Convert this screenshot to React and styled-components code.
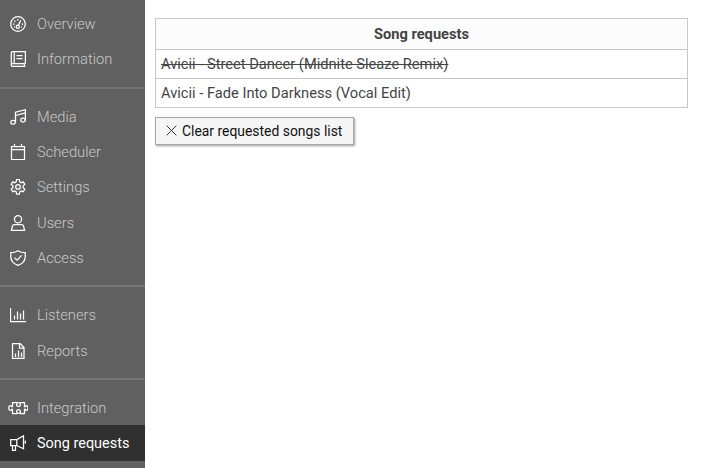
import styled, { createGlobalStyle } from "styled-components"

const icons = {
    overview: (
        <>
            <circle cx="8" cy="8" r="7.3" />
            <circle cx="7.8" cy="10.7" r="1.6" />
            <path d="M8.4 9.2L10.8 4.4M3 8.2h1.5M4.3 4.8l1 .9M7.8 3v1.4M11.7 8.2h1.5M3.9 11.2l.9-.4M12.1 11.2l-.9-.4" />
        </>
    ),
    information: (
        <path d="M15.4 12.5V.6H2.6Q1.3.6 1.3 2v12q0 1.4 1.4 1.4h12.7M1.5 12.5h13.9M14.3 12.5v2.9M4.2.6v11.9M6.5 4.5h6M6.5 7.5h6" />
    ),
    media: (
        <>
            <ellipse cx="3" cy="13.3" rx="2.3" ry="1.9" />
            <ellipse cx="13" cy="11.1" rx="2.3" ry="1.9" />
            <path d="M5.5 13.3V3.2L15.4.7v10.4M5.5 6.5l9.9-2.6" />
        </>
    ),
    scheduler: <path d="M1.5 2.5h13v13h-13zM1.5 5.5h13M4.5 0v2.5M11.5 0v2.5" />,
    settings: (
        <>
            <path d="M6.6.7h2.8l.4 2.1 1.5.9 2-.8 1.5 2.5-1.7 1.5v1.9l1.7 1.4-1.5 2.5-2-.7-1.5.9-.4 2.2H6.6l-.4-2.2-1.5-.9-2 .7-1.5-2.5 1.7-1.4V6.9L1.2 5.4l1.5-2.5 2 .8 1.5-.9z" />
            <circle cx="8" cy="7.9" r="2.3" />
        </>
    ),
    users: (
        <>
            <circle cx="8" cy="4.3" r="3.6" />
            <path d="M4.1 9.5h7.8q1.2 0 1.5 1.2l1.2 4.7H1.4l1.2-4.7q.3-1.2 1.5-1.2z" />
        </>
    ),
    access: (
        <>
            <path d="M8 .7q3 1.9 7.2 2v4.2q0 5.6-7.2 8.5Q.8 12.5.8 6.9V2.7Q5 2.6 8 .7z" />
            <path d="M4.6 7.7l2.5 2.4 4.5-4.7" />
        </>
    ),
    listeners: <path d="M.5 1v13.5H16M4.5 8.5v4M7.5 4.5v8M10.5 6.5v6M13.5 3.5v9" />,
    reports: (
        <>
            <path d="M2.5.6h7.7l3.8 3.9v10.9H2.5zM9.5.6v4.6H14" />
            <path d="M5.5 10.5V14M8.5 7.5V14M11.5 9.5V14" />
        </>
    ),
    integration: (
        <>
            <path d="M9 2.5H4.5v4.2H3.6Q3.4 5.6 2.3 5.6.8 5.6.8 8t1.5 2.4q1.1 0 1.3-1.1h.9v4.2H9M12 2.5h4.5v4.2h.9q.2-1.1 1.1-1.1 1.4 0 1.4 2.4t-1.4 2.4q-.9 0-1.1-1.1h-.9v4.2H12" />
            <circle cx="10.5" cy="4.6" r="1.9" />
            <circle cx="10.5" cy="11.4" r="1.9" />
        </>
    ),
    requests: (
        <>
            <path d="M.7 4.5h6.1L13.5.8v12.9L6.8 10.5H.7zM6.8 4.5v6M2.5 10.5v4.9h3v-4.9" />
            <path d="M14.8 5.8q1.3 1.2 0 2.7" />
        </>
    ),
}

const groups = [
    [
        { icon: "overview", label: "Overview" },
        { icon: "information", label: "Information" },
    ],
    [
        { icon: "media", label: "Media" },
        { icon: "scheduler", label: "Scheduler" },
        { icon: "settings", label: "Settings" },
        { icon: "users", label: "Users" },
        { icon: "access", label: "Access" },
    ],
    [
        { icon: "listeners", label: "Listeners" },
        { icon: "reports", label: "Reports" },
    ],
    [
        { icon: "integration", label: "Integration", wide: true },
        { icon: "requests", label: "Song requests", active: true },
    ],
]

const songs = [
    { title: "Avicii - Street Dancer (Midnite Sleaze Remix)", played: true },
    { title: "Avicii - Fade Into Darkness (Vocal Edit)", played: false },
]

function MenuItem({ icon, label, active, wide }) {
    return (
        <Item $active={active}>
            <IconBox>
                <Icon $wide={wide} viewBox={wide ? "0 0 20.5 16" : "0 0 16 16"}>
                    {icons[icon]}
                </Icon>
            </IconBox>
            {label}
        </Item>
    )
}

export default function App() {
    return (
        <>
            <GlobalStyle />
            <Page>
                <Sidebar>
                    {groups.map((items, index) => (
                        <Group key={index}>
                            {items.map((item) => (
                                <MenuItem key={item.label} {...item} />
                            ))}
                        </Group>
                    ))}
                </Sidebar>
                <Content>
                    <Table>
                        <thead>
                            <tr>
                                <HeadCell>Song requests</HeadCell>
                            </tr>
                        </thead>
                        <tbody>
                            {songs.map((song) => (
                                <tr key={song.title}>
                                    <Cell $played={song.played}>{song.title}</Cell>
                                </tr>
                            ))}
                        </tbody>
                    </Table>
                    <ClearButton type="button">
                        <Cross viewBox="0 0 11 11">
                            <path d="M.7.7l9.6 9.6M10.3.7L.7 10.3" />
                        </Cross>
                        Clear requested songs list
                    </ClearButton>
                </Content>
            </Page>
        </>
    )
}

const GlobalStyle = createGlobalStyle`
    * {
        box-sizing: border-box;
    }

    body {
        margin: 0;
        background: #fff;
        font-family: Roboto, sans-serif;
        overflow: hidden;
    }
`;

const Page = styled.div`
    display: flex;
    height: 100vh;
`;

const Sidebar = styled.nav`
    flex: none;
    width: 145px;
    padding-top: 6.1px;
    background: #606060;
    overflow: hidden;
`;

const Group = styled.div`
    & + & {
        margin-top: 10px;
        padding-top: 10px;
        border-top: 2px solid #747474;
    }
`;

const Item = styled.div`
    display: flex;
    align-items: center;
    height: 35.34px;
    padding: 0.6px 0 0 8px;
    font-size: ${({ $active }) => ($active ? 14.45 : 14.7)}px;
    font-weight: ${({ $active }) => ($active ? 400 : 300)};
    color: ${({ $active }) => ($active ? "#fff" : "#c8c8c8")};
    background: ${({ $active }) => ($active ? "#303030" : "transparent")};
`;

const IconBox = styled.span`
    display: flex;
    justify-content: center;
    width: 20px;
    margin-right: 9px;
`;

const Icon = styled.svg`
    flex: none;
    width: ${({ $wide }) => ($wide ? 20.5 : 16)}px;
    height: 16px;
    fill: none;
    stroke: #fff;
    stroke-width: 1.25;
`;

const Content = styled.main`
    flex: 1;
    padding: 18px 26px 0 10px;
`;

const Table = styled.table`
    width: 100%;
    border-collapse: collapse;
    font-size: 14.65px;
    color: #444;
`;

const HeadCell = styled.th`
    height: 31px;
    padding: 0;
    border: 1px solid #c8c8c8;
    background: #fcfcfc;
    font-weight: 700;
`;

const Cell = styled.td`
    height: 29px;
    padding: 0 5px;
    border: 1px solid #c8c8c8;
    text-decoration: ${({ $played }) => ($played ? "line-through" : "none")};
`;

const ClearButton = styled.button`
    display: flex;
    align-items: center;
    height: 28px;
    margin-top: 9px;
    padding: 0 11px 0 10px;
    border: 1px solid #a8a8a8;
    background: #f5f5f5;
    box-shadow: 1px 1px 2px rgba(0, 0, 0, 0.4);
    font-family: inherit;
    font-size: 13.9px;
    color: #111;
`;

const Cross = styled.svg`
    width: 11px;
    height: 11px;
    margin: 0 5px 2px 0;
    fill: none;
    stroke: #333;
    stroke-width: 1;
`;
